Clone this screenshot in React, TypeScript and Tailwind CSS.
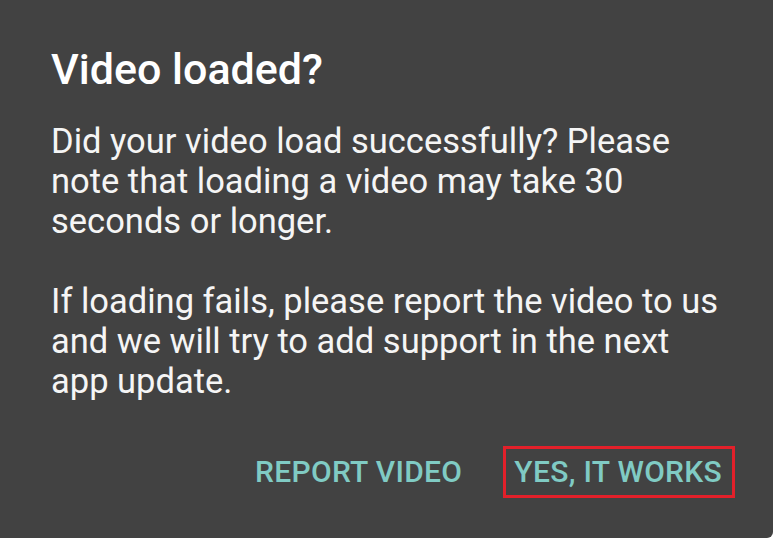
import React from "react";

export default function App() {
  return (
    <div className="w-[773px] h-[538px] bg-[#424242] rounded-br-[6px] overflow-hidden" style={{ fontFamily: "Roboto, 'Noto Sans', sans-serif" }}>
      <div className="pl-[51px] pr-[44px] pt-[44px]">
        <h1 className="text-[43px] leading-[50px] font-medium text-white">Video loaded?</h1>
        <div className="mt-[27px] text-[34.5px] leading-[40px] text-[#f5f5f5]">
          <p>Did your video load successfully? Please note that loading a video may take 30 seconds or longer.</p>
          <p className="mt-[40px]">If loading fails, please report the video to us and we will try to add support in the next app update.</p>
        </div>
      </div>
      <div className="flex justify-end items-center gap-[29px] pr-[38px] mt-[45px]">
        <button className="h-[52px] px-[9px] border-[3px] border-transparent text-[30px] leading-[46px] font-medium text-[#80cbc4] tracking-[0.3px]">
          REPORT VIDEO
        </button>
        <button className="h-[52px] pl-[8px] pr-[10px] border-[3px] border-[#e3202a] text-[30px] leading-[46px] font-medium text-[#80cbc4] tracking-[0.3px]">
          YES, IT WORKS
        </button>
      </div>
    </div>
  );
}
